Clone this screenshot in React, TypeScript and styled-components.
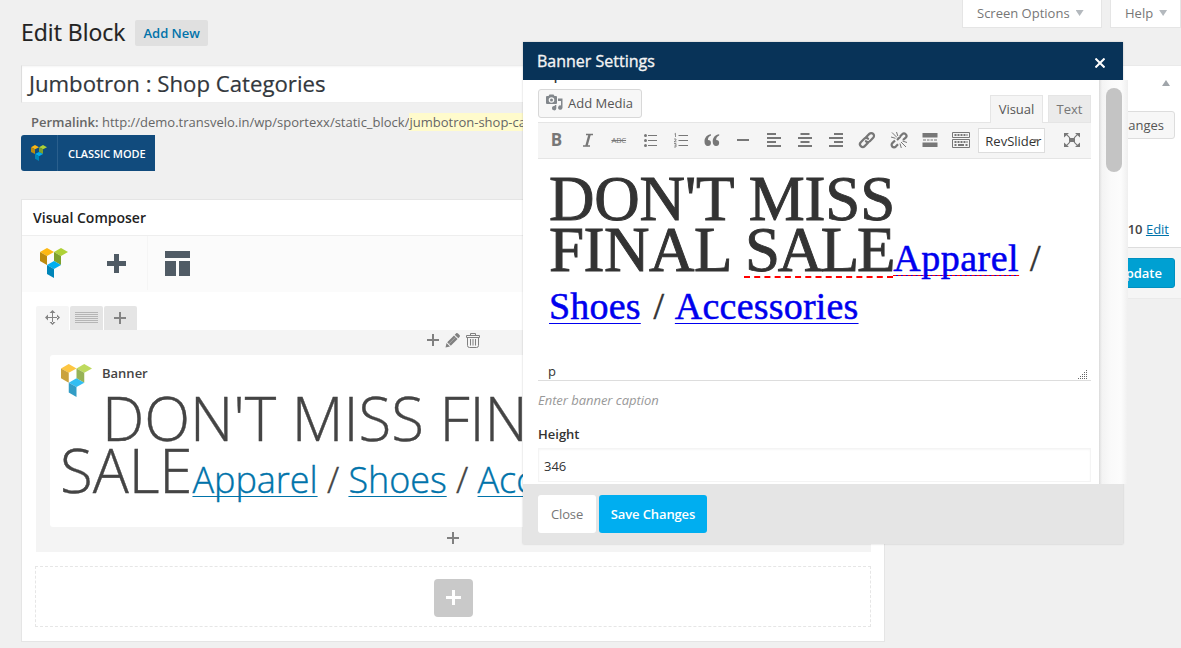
import React from "react";
import styled, { createGlobalStyle } from "styled-components";

const GlobalStyle = createGlobalStyle`
  * { box-sizing: border-box; }
  body {
    margin: 0;
    background: #f0f0f0;
    color: #444;
    font-family: "Open Sans", sans-serif;
    font-size: 13px;
    line-height: 18px;
  }
  h1, h2, h3, p { margin: 0; font-weight: 400; }
  button, input { font-family: inherit; }
`;

const Page = styled.div`
  position: relative;
  width: 1181px;
  height: 648px;
  overflow: hidden;
`;

/* ---------- screen meta tabs ---------- */

const TopBar = styled.header`
  display: flex;
  justify-content: space-between;
  height: 65px;
  padding-left: 21px;
`;

const Heading = styled.div`
  display: flex;
  align-items: center;
  height: 66px;
`;

const PageTitle = styled.h1`
  padding-bottom: 2px;
  font-size: 23px;
  line-height: 30px;
  color: #222;
  -webkit-text-stroke: 0.2px currentColor;
`;

const AddNew = styled.button`
  height: 26px;
  margin-left: 10px;
  padding: 0 8px;
  border: 0;
  border-radius: 2px;
  background: #e0e0e0;
  color: #0073aa;
  font-size: 13px;
  font-weight: 600;
`;

const ScreenTabs = styled.div`
  display: flex;
  gap: 8px;
  height: 28px;
`;

const ScreenTab = styled.div<{ $w: number }>`
  display: flex;
  align-items: center;
  gap: 6px;
  width: ${(p) => p.$w}px;
  padding: 0 0 1px 14px;
  background: #fff;
  border: solid #e5e5e5;
  border-width: 0 1px 1px;
  color: #777;
  white-space: nowrap;
`;

const Caret = styled.i<{ $up?: boolean }>`
  width: 8px;
  height: 6px;
  background: ${(p) => (p.$up ? "#a0a5aa" : "#b4b9be")};
  clip-path: ${(p) =>
    p.$up ? "polygon(50% 0, 100% 100%, 0 100%)" : "polygon(0 0, 100% 0, 50% 100%)"};
`;

/* ---------- page columns ---------- */

const Columns = styled.div`
  display: flex;
  gap: 20px;
  padding-left: 21px;
`;

const MainColumn = styled.main`
  flex: 0 0 864px;
`;

const TitleInput = styled.div`
  height: 38px;
  padding: 0 7px;
  background: #fff;
  border: 1px solid #ddd;
  border-color: #ececec #ddd #eee;
  box-shadow: inset 0 1px 2px rgba(0, 0, 0, 0.04);
  color: #32373c;
  font-size: 22.2px;
  line-height: 36px;
  -webkit-text-stroke: 0.2px currentColor;
`;

const Permalink = styled.div`
  height: 32px;
  padding: 10px 10px 0;
  color: #666;
  white-space: nowrap;

  strong { font-weight: 600; }
  mark { background: #fffbcc; color: inherit; }
`;

const ClassicMode = styled.button`
  display: flex;
  align-items: center;
  width: 134px;
  height: 36px;
  padding: 0;
  border: 0;
  border-radius: 3px 0 0 3px;
  background: #114b7d;
  color: #fff;
  font-size: 11px;
  font-weight: 600;
  letter-spacing: -0.08px;
`;

const ClassicLogo = styled.span`
  display: flex;
  align-items: center;
  width: 37px;
  height: 36px;
  padding: 0 0 1px 10px;
  margin-right: 10px;
  border-right: 1px solid #2a5f8d;
`;

/* ---------- visual composer box ---------- */

const Composer = styled.section`
  height: 443px;
  margin-top: 28px;
  background: #fff;
  border: 1px solid #e5e5e5;
`;

const ComposerTitle = styled.h3`
  height: 36px;
  padding-left: 11px;
  border-bottom: 1px solid #eee;
  color: #222;
  font-size: 14px;
  font-weight: 600;
  line-height: 35px;
`;

const ComposerBar = styled.div`
  display: flex;
  height: 56px;
  padding-bottom: 2px;
  background: #fbfbfb;
`;

const BarCell = styled.div<{ $w: number; $line?: boolean }>`
  display: flex;
  align-items: center;
  justify-content: center;
  width: ${(p) => p.$w}px;
  border-right: ${(p) => (p.$line ? "1px solid #f5f5f5" : "0")};
`;

const RowTabs = styled.div`
  display: flex;
  gap: 1px;
  height: 38px;
  padding: 14px 0 0 14px;
`;

const RowTab = styled.div<{ $active?: boolean }>`
  display: flex;
  align-items: center;
  justify-content: center;
  width: 33px;
  height: 24px;
  padding: 0 1px 1px 0;
  border-radius: 2px 2px 0 0;
  background: ${(p) => (p.$active ? "#f5f5f5" : "#e5e5e5")};
`;

const RowArea = styled.div`
  width: 835px;
  height: 222px;
  margin-left: 14px;
  padding: 0 14px;
  background: #f4f4f4;
`;

const ElementTools = styled.div<{ $h: number; $gap?: number }>`
  display: flex;
  align-items: center;
  justify-content: center;
  gap: 6px;
  height: ${(p) => p.$h}px;
  margin-bottom: ${(p) => p.$gap ?? 0}px;
  padding-right: ${(p) => (p.$gap ? 0 : 1)}px;
`;

const BannerCard = styled.div`
  display: flex;
  align-items: flex-start;
  height: 172px;
  padding: 9px 0 0 11px;
  overflow: hidden;
  border-radius: 3px;
  background: #fff;
`;

const BannerLogo = styled.span`
  flex: 0 0 31px;
  opacity: 0.8;
`;

const BannerBody = styled.div`
  margin-left: 10px;
`;

const BannerName = styled.h3`
  height: 28px;
  color: #444;
  font-size: 13px;
  font-weight: 600;
`;

const BannerLine = styled.p<{ $outdent?: boolean }>`
  height: 52px;
  margin-left: ${(p) => (p.$outdent ? "-42px" : "0")};
  color: #444;
  font-size: 60px;
  font-weight: 300;
  letter-spacing: -0.05px;
  line-height: 52px;
  white-space: nowrap;
  -webkit-text-stroke: 0.4px currentColor;

  small { font-size: 36px; }
  a {
    color: #0073aa;
    text-decoration: underline;
    text-decoration-thickness: 1px;
    text-underline-offset: 3px;
    text-decoration-skip-ink: none;
  }
`;

const EmptyRow = styled.div`
  display: flex;
  align-items: center;
  justify-content: center;
  width: 836px;
  height: 61px;
  margin: 14px 0 0 13px;
  padding-top: 2px;
  border: 1px dashed #e6e6e6;
`;

const AddRow = styled.button`
  display: flex;
  align-items: center;
  justify-content: center;
  width: 39px;
  height: 38px;
  padding: 0;
  border: 0;
  border-radius: 4px;
  background: #c9c9c9;
`;

/* ---------- publish box ---------- */

const PublishBox = styled.aside`
  flex: 0 0 280px;
  height: 234px;
  background: #fff;
  border: 1px solid #eaeaea;
`;

const PublishHead = styled.div`
  display: flex;
  align-items: center;
  justify-content: flex-end;
  height: 34px;
  padding-right: 14px;
`;

const PublishActions = styled.div`
  display: flex;
  justify-content: flex-end;
  padding: 11px 9px 0 0;
`;

const Preview = styled.button`
  height: 28px;
  padding: 0 10px;
  border: 1px solid #ddd;
  border-radius: 3px;
  background: #f7f7f7;
  color: #555;
  font-size: 13px;
`;

const PublishDate = styled.div`
  height: 108px;
  padding: 81px 15px 0 0;
  text-align: right;

  strong { font-weight: 600; }
  a { color: #0073aa; text-decoration: underline; }
`;

const PublishFoot = styled.div`
  display: flex;
  justify-content: flex-end;
  height: 51px;
  padding: 10px 9px 0 0;
  border-top: 1px solid #ddd;
  background: #f5f5f5;
`;

const Update = styled.button`
  height: 30px;
  padding: 0 12px;
  border: 1px solid #0090c0;
  border-radius: 3px;
  background: #00a0d2;
  color: #fff;
  font-size: 13px;
  font-weight: 600;
`;

/* ---------- banner settings window ---------- */

const Window = styled.div`
  position: absolute;
  left: 523px;
  top: 42px;
  width: 600px;
  height: 502px;
  background: #fff;
  box-shadow: 0 0 2px rgba(0, 0, 0, 0.2);
`;

const WindowHead = styled.div`
  display: flex;
  align-items: center;
  justify-content: space-between;
  height: 38px;
  padding: 0 18px 0 14px;
  background: #083358;
  color: #f4f4f4;
  font-size: 16px;
  -webkit-text-stroke: 0.35px currentColor;
`;

const WindowMain = styled.div`
  display: flex;
  width: 605px;
  height: 404px;
  overflow: hidden;
  background: #fff;
`;

const WindowContent = styled.div`
  flex: 0 0 576px;
  min-width: 0;
  padding: 0 8px 0 15px;
`;

const Track = styled.div`
  flex: 1;
  padding: 8px 0 0 7px;
  background: linear-gradient(90deg, #d9d9d9 0, #e4e4e4 1px, #f3f3f3 3px, #fafafa 12px, #fcfcfc 22px, #efefef 29px);
`;

const Thumb = styled.div`
  width: 16px;
  height: 84px;
  border-radius: 8px;
  background: #c4c4c4;
`;

const ClippedLabel = styled.div`
  height: 9px;
  color: #333;
  font-weight: 600;
  line-height: 18px;

  span { display: block; transform: translateY(-14px); }
`;

const EditorTop = styled.div`
  display: flex;
  justify-content: space-between;
  height: 33px;
`;

const AddMedia = styled.button`
  display: flex;
  align-items: center;
  gap: 5px;
  width: 104px;
  height: 29px;
  padding: 0 7px 2px;
  border: 1px solid #d8d8d8;
  border-radius: 3px;
  background: #f7f7f7;
  color: #555;
  font-size: 13px;
  white-space: nowrap;
`;

const ModeTabs = styled.div`
  display: flex;
  align-items: flex-end;
  gap: 5px;
  height: 34px;
`;

const ModeTab = styled.div<{ $active?: boolean; $w: number }>`
  width: ${(p) => p.$w}px;
  height: ${(p) => (p.$active ? 28 : 27)}px;
  margin-bottom: ${(p) => (p.$active ? 0 : 1)}px;
  border: 1px solid #e5e5e5;
  border-bottom: 0;
  background: ${(p) => (p.$active ? "#f5f5f5" : "#ebebeb")};
  color: ${(p) => (p.$active ? "#555" : "#777")};
  line-height: 27px;
  text-align: center;
  z-index: 1;
`;

const EditorBar = styled.div`
  display: flex;
  align-items: center;
  height: 37px;
  padding: 0 0 1px 3px;
  border: solid #e5e5e5;
  border-width: 1px 0;
  background: #f5f5f5;
`;

const Tool = styled.span`
  display: flex;
  flex: none;
  align-items: center;
  justify-content: center;
  width: 31.1px;
  color: #777;
`;

const ExpandTool = styled(Tool)`
  width: 20px;
  margin-left: 17px;
`;

const BoldGlyph = styled.b`
  font-size: 17px;
`;

const StrikeGlyph = styled.s`
  font-size: 8px;
  letter-spacing: -0.2px;
`;

const Slider = styled.div`
  display: flex;
  flex: none;
  align-items: center;
  width: 67px;
  height: 25px;
  margin: 1px 0 0 2px;
  padding-left: 6px;
  border: 1px solid #ddd;
  background: #fff;
  color: #333;
  font-size: 13px;
`;

const SliderCaret = styled(Caret)`
  margin-left: -9px;
  width: 6px;
  height: 4px;
  background: #888;
`;

const EditorText = styled.div`
  height: 202px;
  padding: 15px 0 0 11px;
  color: #333;
  font-family: Georgia, "Liberation Serif", serif;
`;

const EditorLine = styled.p<{ $h: number }>`
  height: ${(p) => p.$h}px;
  font-size: 63px;
  line-height: ${(p) => p.$h}px;
  white-space: nowrap;
  -webkit-text-stroke: 0.9px currentColor;

  small {
    font-size: 38px;
    -webkit-text-stroke-width: 0.5px;
  }
  a {
    color: #00e;
    text-decoration: underline;
    text-decoration-thickness: 1px;
    text-underline-offset: 4px;
    text-decoration-skip-ink: none;
  }
`;

const Phrase = styled.span<{ $ls: number; $ws?: number }>`
  letter-spacing: ${(p) => p.$ls}px;
  word-spacing: ${(p) => p.$ws ?? 0}px;
`;

const Misspelt = styled.span<{ $offset: number; $thick?: number }>`
  text-decoration: underline dashed #f00 ${(p) => p.$thick ?? 2}px;
  text-underline-offset: ${(p) => p.$offset}px;
  text-decoration-skip-ink: none;
`;

const StatusBar = styled.div`
  display: flex;
  align-items: center;
  justify-content: space-between;
  height: 20px;
  padding: 0 3px 0 10px;
  border-bottom: 1px solid #ddd;
  color: #333;
`;

const Hint = styled.p`
  margin-top: 10px;
  color: #999;
  font-style: italic;
  font-size: 13px;
  letter-spacing: -0.04px;
`;

const FieldLabel = styled.h3`
  margin-top: 16px;
  color: #333;
  font-size: 13px;
  font-weight: 600;
`;

const Field = styled.div`
  height: 34px;
  margin-top: 5px;
  padding-left: 5px;
  border: 1px solid #f4f4f4;
  box-shadow: inset 0 1px 2px rgba(0, 0, 0, 0.04);
  color: #333;
  line-height: 34px;
`;

const WindowFoot = styled.div`
  display: flex;
  gap: 3px;
  height: 60px;
  padding: 11px 15px;
  background: #e5e5e5;
`;

const FootButton = styled.button<{ $primary?: boolean }>`
  width: ${(p) => (p.$primary ? 108 : 58)}px;
  height: 38px;
  padding: 0;
  border: 0;
  border-radius: 3px;
  background: ${(p) => (p.$primary ? "#00aef0" : "#fff")};
  color: ${(p) => (p.$primary ? "#fff" : "#777")};
  font-size: 13px;
  font-weight: ${(p) => (p.$primary ? 600 : 400)};
  letter-spacing: -0.12px;
`;

/* ---------- drawings ---------- */

const Logo = ({ w, h }: { w: number; h: number }) => (
  <svg width={w} height={h} viewBox="0 0 28 30" preserveAspectRatio="none" display="block">
    <path fill="#fdb813" d="M0 4l7-4 7 4-7 4z" />
    <path fill="#bd8b0e" d="M0 4l7 4v9l-7-4z" />
    <path fill="#aed136" d="M14 4l7-4 7 4-7 4z" />
    <path fill="#7ea02c" d="M14 4l7 4v9l-7-4z" />
    <path fill="#00aef0" d="M7 17l7-4 7 4-7 4z" />
    <path fill="#0085b8" d="M7 17l7 4v9l-7-4z" />
  </svg>
);

const Plus = ({ size, t, color }: { size: number; t: number; color: string }) => {
  const arm = (size - t) / 2;
  return (
    <svg width={size} height={size} display="block" fill={color}>
      <rect x={arm} width={t} height={size} />
      <rect y={arm} width={size} height={t} />
    </svg>
  );
};

const TemplateIcon = () => (
  <svg width="25" height="25" fill="#505b65">
    <path d="M0 0h25v7H0zM0 10h11v15H0zM14 10h11v15H14z" />
  </svg>
);

const MoveIcon = () => (
  <svg width="15" height="15" fill="#848484">
    <path d="M7 2h1v11H7zM2 7h11v1H2zM7.500 0l3 3h-6zM7.500 15l3-3h-6zM0 7.500l3-3v6zM15 7.500l-3-3v6z" />
  </svg>
);

const LinesIcon = () => (
  <svg width="23" height="14" fill="#b5b5b5">
    {[0, 2, 4, 6, 8, 10].map((y) => (
      <path key={y} d={`M0 ${y + 1}h23v1H0z`} />
    ))}
  </svg>
);

const PencilIcon = () => (
  <svg width="15" height="15" fill="#808080">
    <path d="M0.500 14.500l1-4.500 3.500 3.500zM2.200 9.200l6.800-6.700 3.600 3.600-6.800 6.700zM9.700 1.800L11 .6c.7-.7 1.400-.6 2 0l1.500 1.500c.6.600.6 1.300 0 1.900l-1.200 1.300z" />
    <path d="M4 10.800l6.500-6.500" stroke="#bbb" strokeWidth=".7" />
  </svg>
);

const TrashIcon = () => (
  <svg width="14" height="15" fill="none" stroke="#808080">
    <path d="M.5 4.500v-2h13v2zM4.500 2.500v-2h5v2M1.500 4.500v8q0 2 2 2h7q2 0 2-2v-8M4.500 6v6.500M7 6v6.500M9.500 6v6.500" />
  </svg>
);

const MediaIcon = () => (
  <svg width="17" height="17" fill="#82878c">
    <path
      fillRule="evenodd"
      d="M1 2h1.500L3.500.5h4L8.500 2H10q1 0 1 1v6q0 1-1 1H1q-1 0-1-1V3q0-1 1-1zm4.500 1.200a2.800 2.800 0 1 0 0 5.600 2.800 2.800 0 0 0 0-5.600zm0 1.300a1.500 1.500 0 1 1 0 3 1.500 1.500 0 0 1 0-3z"
    />
    <path d="M12 4.500h4.500v9.300a2.200 2.200 0 1 1-1.500-2.300V7h-3z" />
    <path d="M9 11h1.300v3.500A2.200 2.200 0 1 1 8.500 12z" />
  </svg>
);

const icon = { width: 20, height: 20, fill: "none", stroke: "currentColor", strokeWidth: 1.5 };

const ItalicIcon = () => (
  <svg {...icon}>
    <path d="M8 4.500h7M5 16h7" strokeWidth="1.600" />
    <path d="M11.600 4.500L8.400 16" strokeWidth="2.400" />
  </svg>
);

const BulletIcon = () => (
  <svg {...icon}>
    <path d="M8 5.500h9M8 10.500h9M8 15.500h9" strokeWidth="1" />
    <path d="M5.500 5.500h0M5.500 10.500h0M5.500 15.500h0" strokeWidth="3" strokeLinecap="round" />
  </svg>
);

const NumberIcon = () => (
  <svg {...icon}>
    <path d="M7.500 5.500H17M7.500 10.500H17M7.500 15.500H17" strokeWidth="1" />
    <path d="M3.500 4l1-.7V7M3 9h2v1.300L3 11.800h2.500M3 13.500h2v1.700H3.500M5 15.200V17H3" strokeWidth=".8" />
  </svg>
);

const QuoteIcon = () => (
  <svg {...icon} fill="currentColor" stroke="none">
    <path d="M9 4.200C5 4.800 2.500 7.500 2.500 11.500c0 2.800 1.300 4.500 3.300 4.500a3 3 0 0 0 .2-6.100C5.800 7.900 7 6.300 9 5.500zM17.200 4.200c-4 .6-6.500 3.300-6.500 7.300 0 2.800 1.300 4.500 3.300 4.500a3 3 0 0 0 .2-6.100c-.2-2 1-3.600 3-4.400z" />
  </svg>
);

const RuleIcon = () => (
  <svg {...icon}>
    <path d="M4 10h12" strokeWidth="2" />
  </svg>
);

const AlignIcon = ({ side }: { side: "l" | "c" | "r" }) => {
  const x = (w: number) => (side === "l" ? 3 : side === "r" ? 17 - w : (20 - w) / 2);
  return (
    <svg {...icon} fill="currentColor" stroke="none">
      {[9, 14, 9, 14].map((w, i) => (
        <rect key={i} x={x(w)} y={3 + i * 4} width={w} height="2" />
      ))}
    </svg>
  );
};

const LinkIcon = ({ broken }: { broken?: boolean }) => (
  <svg {...icon} strokeWidth="2.200" strokeLinecap={broken ? "butt" : "round"}>
    {broken ? (
      <>
        <path d="M11 6.500l2.200-2.300a2.400 2.400 0 0 1 3.500 3.500L14 10M6 10.500l-2.700 2.600a2.400 2.400 0 0 0 3.500 3.500L9 14.300M8 10l3.500-3.500" />
        <path d="M3 2.500l5 5M7.500 2l1.300 4M2 7l4.500 1.300M12 12l5 5M11 13.500l1.300 4.500M13.500 11l4.500 1.500" strokeWidth="1" />
      </>
    ) : (
      <>
        <path d="M9 7.200l3.300-3.300a2.700 2.700 0 0 1 3.900 3.900l-3.400 3.400a2.700 2.700 0 0 1-3.900 0" />
        <path d="M11 12.800l-3.300 3.300a2.700 2.700 0 0 1-3.900-3.900l3.400-3.400a2.700 2.700 0 0 1 3.900 0" />
      </>
    )}
  </svg>
);

const MoreIcon = () => (
  <svg {...icon} fill="currentColor" stroke="none">
    <path d="M2.500 3h15v4.500h-15zM2.500 12.500h15V17h-15zM3 9.500h3v1H3zM7 9.500h2.500v1H7zM10.500 9.500H13v1h-2.500zM14 9.500h3v1h-3z" />
  </svg>
);

const KeyboardIcon = () => (
  <svg {...icon} strokeWidth="1">
    <path d="M1.500 2.500h17v5h-17zM1.500 9.500h17v8h-17z" />
    <path d="M3.500 5h13M3.500 12h13" strokeWidth="2" strokeDasharray="2 1" />
    <path d="M3.500 15h2M7 15h6M14.500 15h2" strokeWidth="2" />
  </svg>
);

const ExpandIcon = () => (
  <svg {...icon} fill="currentColor" stroke="none">
    <path d="M7 8h6v4H7zM2 3h5L5.300 4.500l3 3-.8.8-3-3L2 7.500zM18 3h-5l1.700 1.500-3 3 .8.800 3-3L18 7.500zM2 17h5l-1.700-1.500 3-3-.8-.8-3 3L2 12.500zM18 17h-5l1.700-1.500-3-3 .8-.8 3 3 2.500-2.200z" />
  </svg>
);

const CloseMark = styled.svg`
  margin-top: 4px;
`;

const CloseIcon = () => (
  <CloseMark width="10" height="10" stroke="#fff" strokeWidth="2">
    <path d="M.5.5l9 9M9.500.5l-9 9" />
  </CloseMark>
);

const Grip = styled.svg`
  margin-top: 6px;
`;

const GripIcon = () => (
  <Grip width="10" height="10" stroke="#666" strokeWidth="1" strokeDasharray="1 1">
    <path d="M8 1.500h2M6 3.500h4M4 5.500h6M2 7.500h8M0 9.500h10" />
  </Grip>
);

const tools = [
  <BoldGlyph>B</BoldGlyph>,
  <ItalicIcon />,
  <StrikeGlyph>ABC</StrikeGlyph>,
  <BulletIcon />,
  <NumberIcon />,
  <QuoteIcon />,
  <RuleIcon />,
  <AlignIcon side="l" />,
  <AlignIcon side="c" />,
  <AlignIcon side="r" />,
  <LinkIcon />,
  <LinkIcon broken />,
  <MoreIcon />,
  <KeyboardIcon />,
];

const SettingsWindow = () => (
  <Window>
    <WindowHead>
      Banner Settings
      <CloseIcon />
    </WindowHead>
    <WindowMain>
      <WindowContent>
        <ClippedLabel><span>Caption</span></ClippedLabel>
        <EditorTop>
          <AddMedia><MediaIcon />Add Media</AddMedia>
          <ModeTabs>
            <ModeTab $active $w={53}>Visual</ModeTab>
            <ModeTab $w={43}>Text</ModeTab>
          </ModeTabs>
        </EditorTop>
        <EditorBar>
          {tools.map((t, i) => <Tool key={i}>{t}</Tool>)}
          <Slider>RevSlider<SliderCaret /></Slider>
          <ExpandTool><ExpandIcon /></ExpandTool>
        </EditorBar>
        <EditorText>
          <EditorLine $h={51}><Phrase $ls={-0.2}>DON'T MISS</Phrase></EditorLine>
          <EditorLine $h={51}>
            <Phrase $ls={-0.5}>FINAL </Phrase>
            <Misspelt $offset={5}><Phrase $ls={-2.3}>SALE</Phrase></Misspelt>
            <small>
              <Phrase $ls={0.5} $ws={1}>
                <a><Misspelt $offset={4} $thick={1}>Apparel</Misspelt></a> /
              </Phrase>
            </small>
          </EditorLine>
          <EditorLine $h={45}>
            <small><Phrase $ls={0.2} $ws={3}><a>Shoes</a> / <a>Accessories</a></Phrase></small>
          </EditorLine>
        </EditorText>
        <StatusBar>p<GripIcon /></StatusBar>
        <Hint>Enter banner caption</Hint>
        <FieldLabel>Height</FieldLabel>
        <Field>346</Field>
      </WindowContent>
      <Track><Thumb /></Track>
    </WindowMain>
    <WindowFoot>
      <FootButton>Close</FootButton>
      <FootButton $primary>Save Changes</FootButton>
    </WindowFoot>
  </Window>
);

export default function App() {
  return (
    <Page>
      <GlobalStyle />
      <TopBar>
        <Heading>
          <PageTitle>Edit Block</PageTitle>
          <AddNew>Add New</AddNew>
        </Heading>
        <ScreenTabs>
          <ScreenTab $w={140}>Screen Options<Caret /></ScreenTab>
          <ScreenTab $w={71}>Help<Caret /></ScreenTab>
        </ScreenTabs>
      </TopBar>
      <Columns>
        <MainColumn>
          <TitleInput>Jumbotron : Shop Categories</TitleInput>
          <Permalink>
            <strong>Permalink:</strong> http://demo.transvelo.in/wp/sportexx/static_block/<mark>jumbotron-shop-categories</mark>/
          </Permalink>
          <ClassicMode>
            <ClassicLogo><Logo w={16} h={16} /></ClassicLogo>
            CLASSIC MODE
          </ClassicMode>
          <Composer>
            <ComposerTitle>Visual Composer</ComposerTitle>
            <ComposerBar>
              <BarCell $w={63}><Logo w={28} h={30} /></BarCell>
              <BarCell $w={63} $line><Plus size={19} t={5} color="#505b65" /></BarCell>
              <BarCell $w={58}><TemplateIcon /></BarCell>
            </ComposerBar>
            <RowTabs>
              <RowTab $active><MoveIcon /></RowTab>
              <RowTab><LinesIcon /></RowTab>
              <RowTab><Plus size={12} t={2} color="#848484" /></RowTab>
            </RowTabs>
            <RowArea>
              <ElementTools $h={20} $gap={5}>
                <Plus size={12} t={2} color="#808080" />
                <PencilIcon />
                <TrashIcon />
              </ElementTools>
              <BannerCard>
                <BannerLogo><Logo w={31} h={33} /></BannerLogo>
                <BannerBody>
                  <BannerName>Banner</BannerName>
                  <BannerLine>DON'T MISS FINAL</BannerLine>
                  <BannerLine $outdent>
                    SALE<small><a>Apparel</a> / <a>Shoes</a> / <a>Accessories</a></small>
                  </BannerLine>
                </BannerBody>
              </BannerCard>
              <ElementTools $h={22}><Plus size={12} t={2} color="#808080" /></ElementTools>
            </RowArea>
            <EmptyRow>
              <AddRow><Plus size={15} t={3} color="#fff" /></AddRow>
            </EmptyRow>
          </Composer>
        </MainColumn>
        <PublishBox>
          <PublishHead><Caret $up /></PublishHead>
          <PublishActions><Preview>Preview Changes</Preview></PublishActions>
          <PublishDate><strong>Oct 16, 2014 @ 10:10</strong> <a>Edit</a></PublishDate>
          <PublishFoot><Update>Update</Update></PublishFoot>
        </PublishBox>
      </Columns>
      <SettingsWindow />
    </Page>
  );
}
